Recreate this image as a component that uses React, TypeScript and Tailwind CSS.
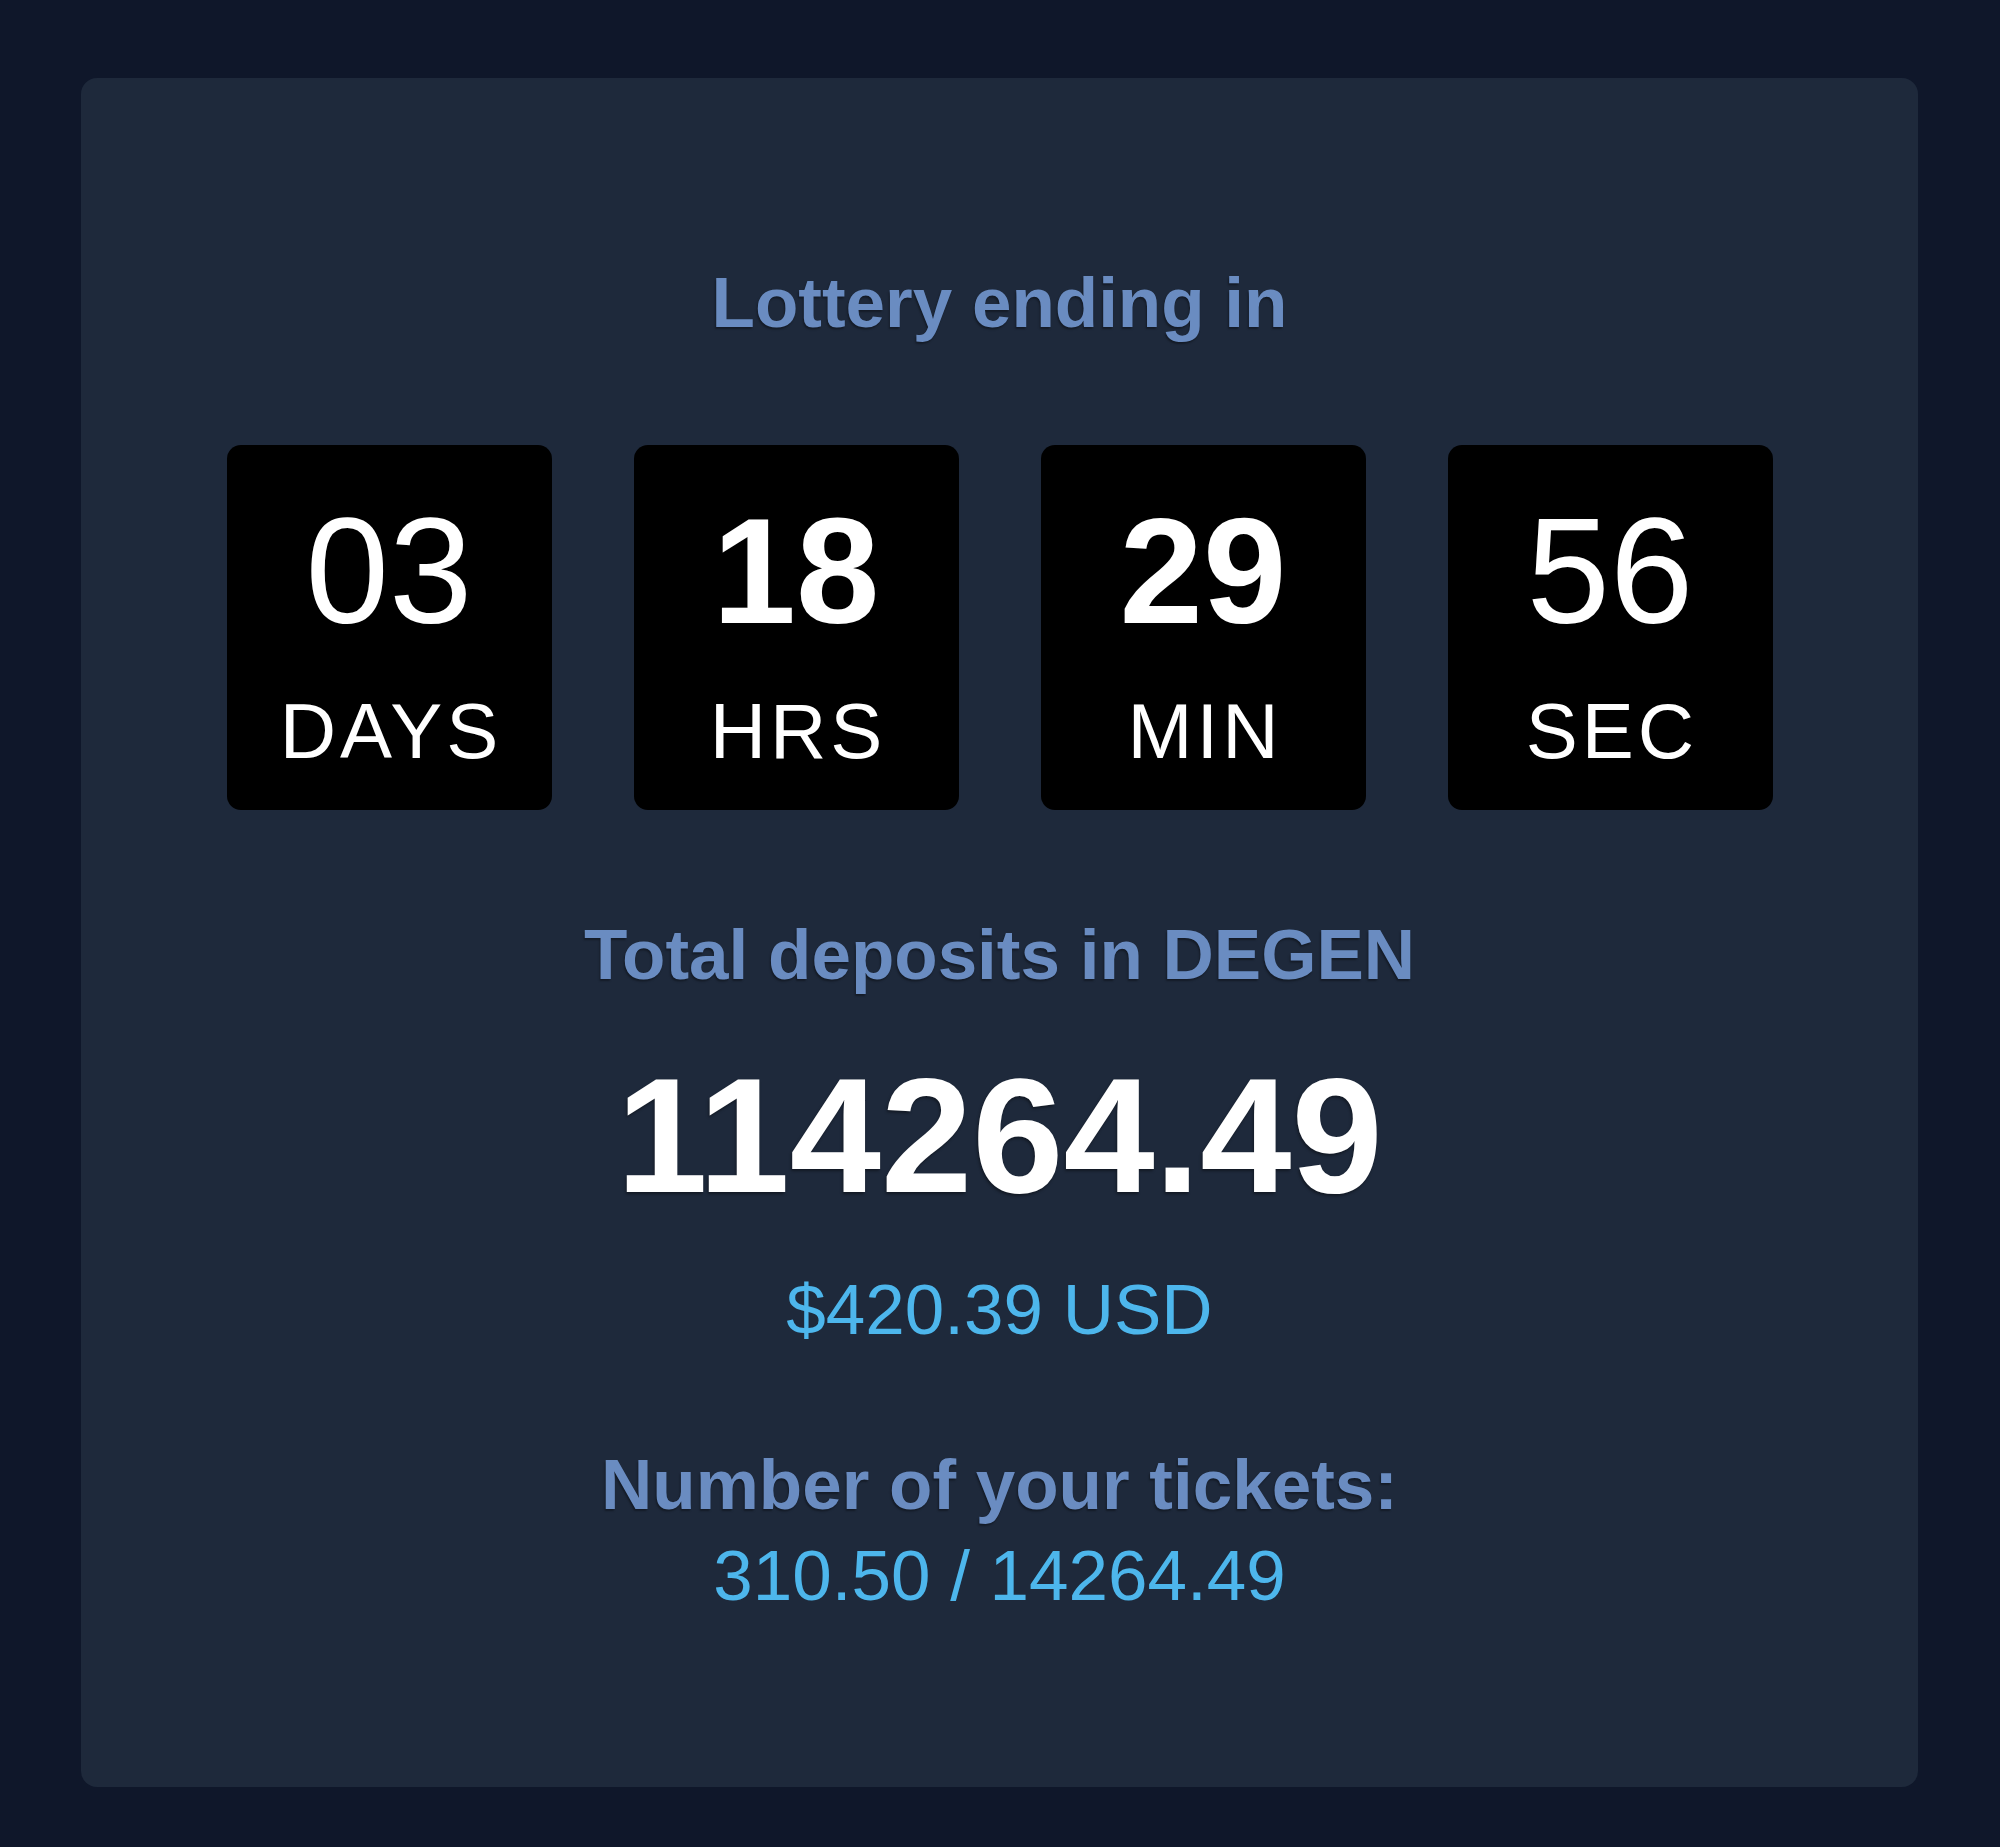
import React from 'react';

// Countdown segments shown in the black tiles
const SEGMENTS = [
    { value: '03', label: 'DAYS', bold: false },
    { value: '18', label: 'HRS', bold: true },
    { value: '29', label: 'MIN', bold: true },
    { value: '56', label: 'SEC', bold: false },
];

const TimeTile = ({ value, label, bold }: { value: string; label: string; bold: boolean }) => (
    <div className="w-[325px] h-[365px] bg-black rounded-[14px] flex flex-col items-center pt-[51px]">
        <div className={`text-[150px] leading-none text-white ${bold ? 'font-bold' : 'font-normal'}`}>{value}</div>
        <div className="mt-[46px] text-[78px] leading-none tracking-[4px] pl-[4px] text-white">{label}</div>
    </div>
);

export default function App() {
    return (
        <div className="min-h-screen bg-[#0f172a] pt-[78px] pl-[81px] pr-[82px] pb-[60px] font-['Liberation_Sans',Arial,sans-serif]">
            <div className="bg-[#1e293b] rounded-[16px] flex flex-col items-center pt-[189px] pb-[176px] text-center">
                <h2 className="text-[71px] leading-none font-bold text-[#6a8cc1] [text-shadow:-1px_2px_2px_rgba(0,0,0,0.35)]">
                    Lottery ending in
                </h2>

                <div className="mt-[107px] flex gap-[82px]">
                    {SEGMENTS.map((s) => (
                        <TimeTile key={s.label} {...s} />
                    ))}
                </div>

                <h2 className="mt-[109px] text-[71px] leading-none font-bold text-[#6a8cc1] [text-shadow:-1px_2px_2px_rgba(0,0,0,0.35)]">
                    Total deposits in DEGEN
                </h2>
                <div className="mt-[64px] text-[164px] leading-none font-bold text-white [text-shadow:-1px_2px_3px_rgba(0,0,0,0.4)]">
                    114264.49
                </div>
                <div className="mt-[56px] text-[71px] leading-none text-[#4db6ec]">$420.39 USD</div>

                <h2 className="mt-[104px] text-[71px] leading-none font-bold text-[#6a8cc1] [text-shadow:-1px_2px_2px_rgba(0,0,0,0.35)]">
                    Number of your tickets:
                </h2>
                <div className="mt-[20px] text-[71px] leading-none text-[#4db6ec]">310.50 / 14264.49</div>
            </div>
        </div>
    );
}
